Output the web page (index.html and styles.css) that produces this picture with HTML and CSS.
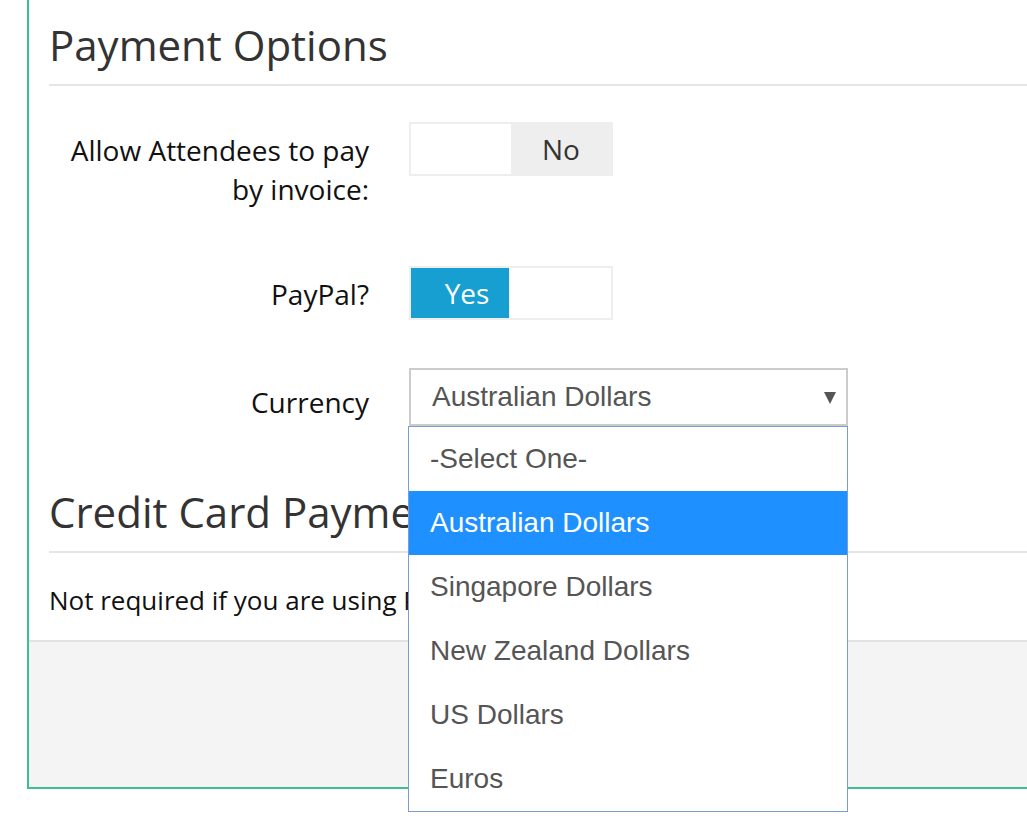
FILE: index.html
```html
<!DOCTYPE html>
<html lang="en">
<head>
<meta charset="utf-8">
<title>Payment Options</title>
<link rel="stylesheet" href="styles.css">
</head>
<body>
<div class="panel">
  <div class="panel-body">
    <h2 class="section-title">Payment Options</h2>
    <div class="form">
      <div class="form-row row-invoice">
        <label class="form-label">Allow Attendees to pay by invoice:</label>
        <div class="switch">
          <span class="switch-blank"></span>
          <span class="switch-off">No</span>
        </div>
      </div>
      <div class="form-row row-paypal">
        <label class="form-label">PayPal?</label>
        <div class="switch">
          <span class="switch-on">Yes</span>
          <span class="switch-blank switch-blank-right"></span>
        </div>
      </div>
      <div class="form-row row-currency">
        <label class="form-label label-currency">Currency</label>
        <div class="select-wrap">
          <div class="select">
            <span class="select-value">Australian Dollars</span>
            <span class="select-arrow"></span>
          </div>
          <ul class="select-menu">
            <li class="select-option">-Select One-</li>
            <li class="select-option is-selected">Australian Dollars</li>
            <li class="select-option">Singapore Dollars</li>
            <li class="select-option">New Zealand Dollars</li>
            <li class="select-option">US Dollars</li>
            <li class="select-option">Euros</li>
          </ul>
        </div>
      </div>
    </div>
    <h2 class="section-title section-credit">Credit Card Payment Details</h2>
    <p class="note">Not required if you are using PayPal.</p>
  </div>
  <div class="panel-footer"></div>
</div>
</body>
</html>
```

FILE: styles.css
```css
html {
  overflow-x: hidden;
}

body {
  margin: 0;
  padding: 0;
  min-height: 823px;
  background: #ffffff;
  font-family: "Open Sans", "DejaVu Sans", sans-serif;
  color: #111111;
}

.panel {
  margin-left: 27px;
  border-left: 2px solid #40be93;
  border-bottom: 2px solid #40be93;
}

.panel-body {
  padding: 22px 0 0 20px;
  overflow: visible;
}

.section-title {
  margin: 0;
  font-size: 42px;
  line-height: 46px;
  font-weight: 400;
  color: #333333;
  padding-bottom: 16px;
  border-bottom: 2px solid #e5e5e5;
  white-space: nowrap;
}

.section-credit {
  margin-top: 63px;
}

.form {
  margin-top: 36px;
}

.form-row {
  display: grid;
  grid-template-columns: 320px 1fr;
  column-gap: 40px;
  align-items: start;
}

.row-invoice { margin-bottom: 57px; }
.row-paypal { margin-bottom: 48px; }

.form-label {
  text-align: right;
  font-size: 28px;
  line-height: 39px;
  padding-top: 9px;
  color: #111111;
}

.label-currency {
  padding-top: 15px;
}

.switch {
  display: flex;
  width: 200px;
  height: 50px;
  border: 2px solid #eeeeee;
  background: #ffffff;
  font-size: 28px;
  line-height: 50px;
}

.switch-blank {
  width: 100px;
  background: #ffffff;
}

.switch-blank-right {
  width: 101px;
  border-left: 1px solid #f2f2f2;
}

.switch-off {
  width: 100px;
  background: #eeeeee;
  color: #333333;
  text-align: center;
}

.switch-on {
  width: 84px;
  padding-left: 14px;
  background: #169fd0;
  color: #ffffff;
  text-align: center;
}

.select-wrap {
  position: relative;
  width: 439px;
}

.select {
  display: flex;
  align-items: center;
  justify-content: space-between;
  height: 54px;
  border: 2px solid #cccccc;
  padding: 0 10px 0 21px;
  font-family: "Liberation Sans", Arial, sans-serif;
  font-size: 28px;
  color: #555555;
  background: #ffffff;
}

.select-arrow {
  width: 0;
  height: 0;
  border-left: 6px solid transparent;
  border-right: 6px solid transparent;
  border-top: 12px solid #555555;
  margin-top: 2px;
}

.select-menu {
  position: absolute;
  top: 100%;
  left: -1px;
  z-index: 5;
  width: 438px;
  margin: 0;
  padding: 0;
  list-style: none;
  background: #ffffff;
  border: 1px solid #7a9bd5;
  font-family: "Liberation Sans", Arial, sans-serif;
  font-size: 28px;
}

.select-option {
  height: 64px;
  line-height: 64px;
  padding-left: 21px;
  color: #555555;
}

.select-option.is-selected {
  background: #1e90ff;
  color: #ffffff;
}

.note {
  margin: 28px 0 0 0;
  font-size: 26px;
  line-height: 39px;
  color: #111111;
  white-space: nowrap;
}

.panel-footer {
  margin-top: 20px;
  height: 145px;
  border-top: 2px solid #e3e3e3;
  background: #f4f4f4;
}
```
